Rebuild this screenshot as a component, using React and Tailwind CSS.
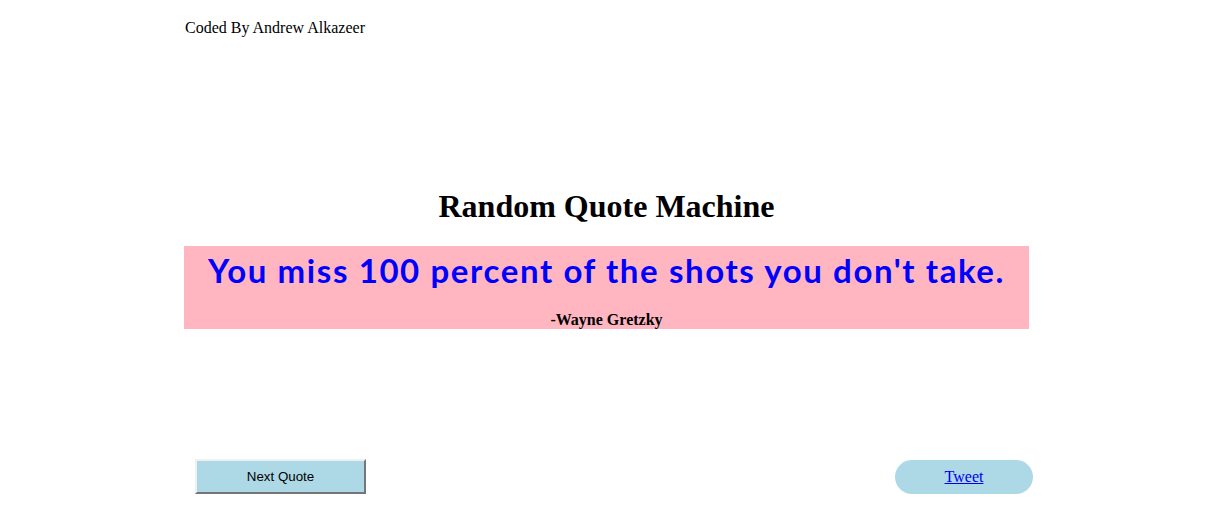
export default function App() {
  return (
    <div className="w-[1215px] h-[521px] bg-white" style={{ fontFamily: '"Liberation Serif", serif' }}>
      <div className="w-[845px] ml-[184px] flex flex-col">
        <div className="pt-[18px] pl-[1px] text-[16px] leading-[20px] text-black">Coded By Andrew Alkazeer</div>
        <h1 className="mt-[150px] text-center font-bold text-[32px] leading-[37px] text-black">Random Quote Machine</h1>
        <div className="mt-[21px] h-[83px] bg-[#ffb6c1] flex flex-col items-center">
          <div className="pt-[5px] text-[33px] leading-[38px] font-bold tracking-[1.6px] text-[#0000ff] whitespace-nowrap" style={{ fontFamily: 'Lato, sans-serif' }}>You miss 100 percent of the shots you don't take.</div>
          <div className="mt-[23px] text-[16px] leading-[16px] font-bold text-black">-Wayne Gretzky</div>
        </div>
        <div className="mt-[130px] flex justify-between items-center pl-[11px] mr-[-4px]">
          <button className="w-[171px] h-[35px] bg-[#add8e6] border-2 border-solid border-t-[#f0f0f0] border-l-[#f0f0f0] border-r-[#767676] border-b-[#767676] text-[13.33px] text-black" style={{ fontFamily: '"Liberation Sans", Arial, sans-serif' }}>Next Quote</button>
          <div className="w-[138px] h-[34px] rounded-full bg-[#add8e6] flex items-center justify-center">
            <a href="#" className="text-[#0000ee] underline text-[16px]">Tweet</a>
          </div>
        </div>
      </div>
    </div>
  );
}
